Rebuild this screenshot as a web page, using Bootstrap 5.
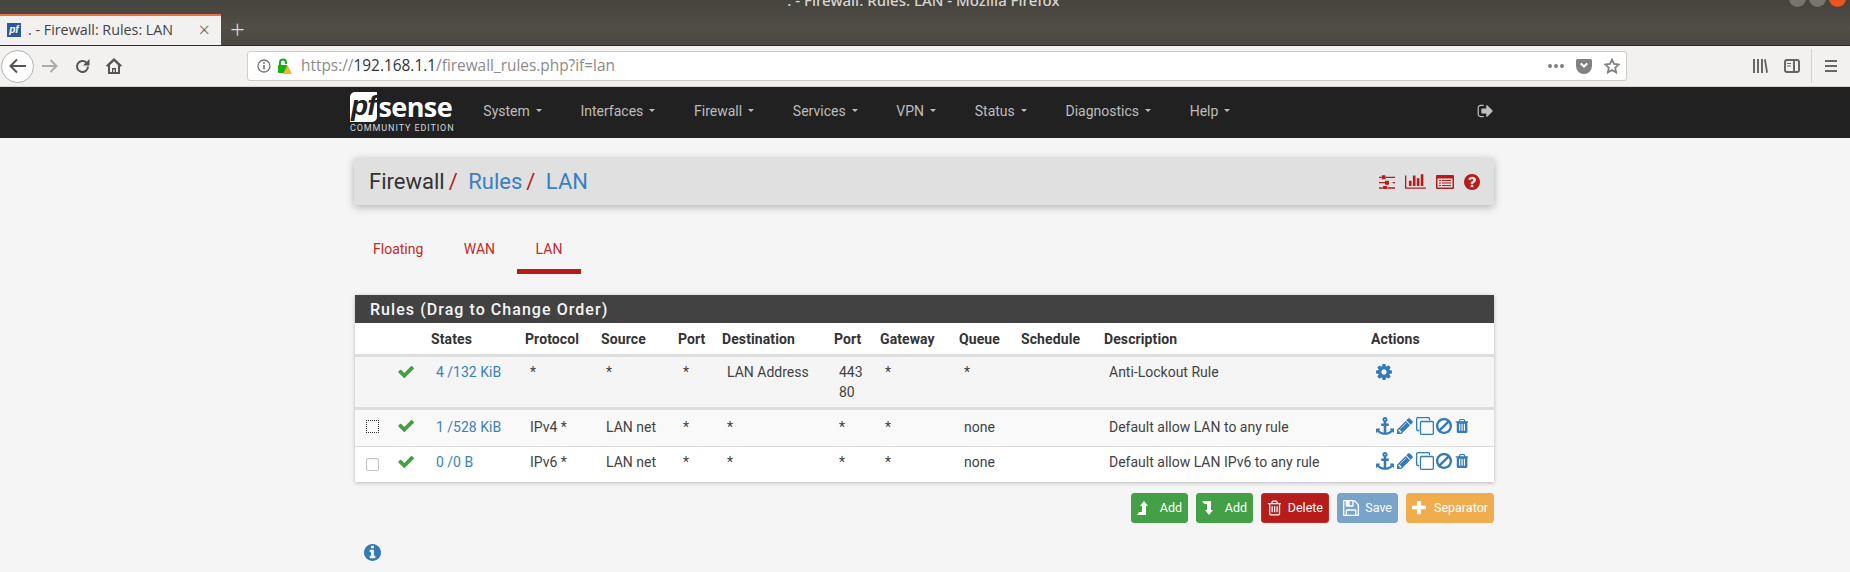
<!DOCTYPE html>
<html lang="en">
<head>
    <meta charset="UTF-8">
    <meta name="viewport" content="width=device-width, initial-scale=1.0">
    <title>. - Firewall: Rules: LAN</title>
    <link href="https://cdn.jsdelivr.net/npm/bootstrap@5.3.1/dist/css/bootstrap.min.css" rel="stylesheet">
    <style>
        body { background: #f5f5f5; font-family: Roboto, "Liberation Sans", sans-serif; font-size: 14px; line-height: 20px; color: #424242; overflow: hidden; }
        a { color: #3a80bf; text-decoration: none; }
        .ico { fill: currentColor; display: block; flex: none; }

        /* browser chrome */
        .win-bar { height: 46px; background: linear-gradient(#45433d, #514e47 60%, #4a4842); border-bottom: 1px solid #2b2a27; overflow: hidden; }
        .win-title { height: 14px; color: #d8d6d0; font: 500 15px/14px "Noto Sans", sans-serif; margin-top: -7px; padding-left: 58px; text-align: center; }
        .win-btns { gap: 3px; margin-top: -10px; padding-right: 4px; height: 17px; }
        .win-dot { width: 17px; height: 17px; border-radius: 50%; background: #77756e; }
        .win-dot.shut { background: #e95420; }
        .win-tabs { margin-top: 7px; height: 31px; }
        .win-tab { width: 221px; height: 31px; background: #f2f1ef; border-top: 2px solid #e9704a; padding-left: 7px; color: #444; font: 14.3px/28px "Open Sans", sans-serif; gap: 7px; }
        .tab-logo { width: 14px; height: 14px; margin-top: 7px; background: #2a5a9e; color: #fff; font: italic 700 10px/14px "Liberation Sans", sans-serif; text-align: center; }
        .tab-close { margin-left: auto; margin-right: 11px; font-size: 20px; color: #555; font-weight: 300; }
        .tab-plus { margin-left: 9px; color: #ddd; font: 300 26px/30px "Open Sans", sans-serif; }
        .tool-bar { height: 41px; background: #f2f1ef; border-bottom: 1px solid #d6d4d0; color: #555; }
        .back-btn { width: 33px; height: 33px; margin-left: 1px; border: 1px solid #b3b1ad; border-radius: 50%; background: #fff; }
        .tool-slot { width: 32px; }
        .url-box { width: 1380px; height: 30px; margin-left: 117px; background: #fff; border: 1px solid #cfcdc9; border-radius: 3px; font: 15.4px/28px "Open Sans", sans-serif; color: #8a8a8a; padding-left: 9px; }
        .url-box b { font-weight: 400; color: #333; }
        .url-lock { margin: 0 9px 0 7px; }
        .url-end { margin-left: auto; gap: 12px; padding-right: 6px; color: #808080; }
        .tool-end { margin-left: auto; padding-right: 13px; color: #666; }
        .tool-end .ico:first-child { margin-right: 16px; }
        .tool-sep { width: 1px; height: 34px; background: #d6d4d0; margin: 0 13px 0 11px; }

        /* pfsense header */
        .pf-nav { height: 51px; background: #212121; padding: 0; }
        .pf-wrap { width: 1140px; margin: 0 auto; }
        .pf-logo { width: 102px; margin-left: -5px; }
        .pf-mark { color: #fff; gap: 2px; height: 30px; }
        .pf-box { background: #fff; color: #212121; width: 30px; height: 30px; font: italic 700 28px/28px "Liberation Sans", sans-serif; text-align: center; border-radius: 5px 0 5px 0; letter-spacing: -1px; }
        .pf-sense { font: 700 27px/30px "Open Sans", sans-serif; letter-spacing: -.6px; }
        .pf-ed { font: 400 9px/11px Roboto, sans-serif; letter-spacing: .9px; color: #cfd8dc; white-space: nowrap; margin-top: 1px; }
        .pf-menu { margin: 0 0 4px 12px; flex-direction: row; }
        .pf-menu .nav-link { color: #bdbdbd; padding: 0 19.35px; font-size: 14px; line-height: 20px; }
        .pf-menu .dropdown-toggle::after { border-width: 3.5px 3.5px 0; margin-left: 6px; }
        .pf-out { margin: 0 2px 4px auto; color: #bdbdbd; }

        /* page */
        .crumb-panel { height: 47px; margin: 20px 1px 0 -1px; padding: 0 14px 0 15px; background: #e0e0e0; border-radius: 2px; box-shadow: 0 2px 9px rgba(0,0,0,.28); font-size: 22px; line-height: 47px; color: #333; }
        .crumb-sep { color: #b71c1c; margin: 0 10.5px 0 4px; }
        .crumb-icons { color: #b71c1c; gap: 10px; margin-left: auto; }
        .rule-tabs { height: 49px; margin: 20px 0 0 -1px; gap: 2.5px; }
        .rule-tabs .nav-link { color: #c62828; padding: 14px 19px 0; height: 49px; }
        .rule-tabs .nav-link.active { border-bottom: 5px solid #b71c1c; }
        .rule-panel { margin: 21px 1px 0 0; background: #fff; box-shadow: 0 1px 4px rgba(0,0,0,.25); }
        .rule-head { height: 28px; padding-left: 15px; background: #424242; color: #f5f5f5; font-size: 16px; font-weight: 500; line-height: 29px; letter-spacing: 1.05px; }
        .rule-table { table-layout: fixed; width: 1139px; margin: 0; --bs-table-bg: transparent; color: #424242; }
        .rule-table th { height: 32px; padding: 6px 0 0 5px; font-weight: 700; letter-spacing: .1px; color: #333; border-bottom: 3px solid #ddd; vertical-align: top; }
        .rule-table td { padding: 5px 0 0 10px; border-bottom: 1px solid #ddd; vertical-align: top; }
        .row-fixed td { height: 53px; background: #f5f5f5; border-bottom: 3px solid #ddd; }
        .row-four td { height: 38px; background: #f9f9f9; padding-top: 7px; }
        .row-six td { height: 36px; background: #fff; border-bottom: 0; }
        .rule-table td.cell-box { padding: 10px 0 0 11px; }
        .rule-table .row-six td.cell-box { padding-top: 11px; }
        .rule-table td.cell-ok { padding: 9px 0 0 5px; color: #43a047; }
        .rule-table .row-four td.cell-ok { padding-top: 10px; }
        .box-mark { display: block; margin: 0; width: 13px; height: 13px; border: 1px solid #c4c4c4; border-radius: 2px; box-shadow: inset 0 1px 1px rgba(0,0,0,.06); }
        .row-four .box-mark { border: 1px dotted #333; border-radius: 0; }
        .act-icons { color: #337ab7; gap: 2.75px; margin: 0; }
        .rule-table td.cell-act { padding-top: 7px; }
        .rule-table .row-six td.cell-act { padding-top: 5px; }
        .act-btns { gap: 8px; margin-top: 11px; padding-right: 1px; }
        .act-btns .btn { height: 30px; padding: 0 5px; border-radius: 3px; border-width: 1px; font-size: 12.5px; line-height: 28px; color: #fff; display: flex; align-items: center; }
        .act-btn-green { background: #43a047; border-color: #43a047; width: 57px; }
        .act-btn-red { background: #b71c1c; border-color: #c62828; width: 68px; }
        .act-btn-blue { background: #7aa3ca; border-color: #7aa3ca; width: 61px; }
        .act-btn-orange { background: #f0ad4e; border-color: #f0ad4e; width: 88px; }
        .act-btns .btn span { margin-left: auto; }
        .page-info { margin: 21px 0 0 9px; color: #337ab7; }
    </style>
</head>
<body>
    <!-- icon glyphs -->
    <svg width="0" height="0" class="position-absolute">
        <symbol id="i-check" viewBox="93 334 1578 1188"><path d="M1671 566q0 40-28 68l-724 724-136 136q-28 28-68 28t-68-28l-136-136-362-362q-28-28-28-68t28-68l136-136q28-28 68-28t68 28l294 295 656-657q28-28 68-28t68 28l136 136q28 28 28 68z"/></symbol>
        <symbol id="i-cog" viewBox="128 128 1536 1536"><path d="M1152 896q0-106-75-181t-181-75-181 75-75 181 75 181 181 75 181-75 75-181zm512-109v222q0 12-8 23t-20 13l-185 28q-19 54-39 91 35 50 107 138 10 12 10 25t-9 23q-27 37-99 108t-94 71q-12 0-26-9l-138-108q-44 23-91 38-16 136-29 186-7 28-36 28h-222q-14 0-24.5-8.5t-11.5-21.5l-28-184q-49-16-90-37l-141 107q-10 9-25 9-14 0-25-11-126-114-165-168-7-10-7-23 0-12 8-23 15-21 51-66.5t54-70.5q-27-50-41-99l-183-27q-13-2-21-12.5t-8-23.5v-222q0-12 8-23t19-13l186-28q14-46 39-92-40-57-107-138-10-12-10-24 0-10 9-23 26-36 98.5-107.5t94.5-71.5q13 0 26 10l138 107q44-23 91-38 16-136 29-186 7-28 36-28h222q14 0 24.5 8.5t11.5 21.5l28 184q49 16 90 37l142-107q9-9 24-9 13 0 25 10 129 119 165 170 7 8 7 22 0 12-8 23-15 21-51 66.5t-54 70.5q26 50 41 98l183 28q13 2 21 12.5t8 23.5z"/></symbol>
        <symbol id="i-question" viewBox="128 128 1536 1536"><path d="M1024 1376v-192q0-14-9-23t-23-9h-192q-14 0-23 9t-9 23v192q0 14 9 23t23 9h192q14 0 23-9t9-23zm256-672q0-88-55.5-163t-138.5-116-170-41q-243 0-371 213-15 24 8 42l132 100q7 6 19 6 16 0 25-12 53-68 86-92 34-24 86-24 48 0 85.5 26t37.5 59q0 38-20 61t-68 45q-63 28-115.5 86.5t-52.5 125.5v36q0 14 9 23t23 9h192q14 0 23-9t9-23q0-19 21.5-49.5t54.5-49.5q32-18 49-28.5t46-35 44.5-48 28-60.5 12.5-81zm384 192q0 209-103 385.5t-279.5 279.5-385.5 103-385.5-103-279.5-279.5-103-385.5 103-385.5 279.5-279.5 385.5-103 385.5 103 279.5 279.5 103 385.5z"/></symbol>
        <symbol id="i-info" viewBox="128 128 1536 1536"><path d="M1152 1376v-160q0-14-9-23t-23-9h-96v-512q0-14-9-23t-23-9h-320q-14 0-23 9t-9 23v160q0 14 9 23t23 9h96v320h-96q-14 0-23 9t-9 23v160q0 14 9 23t23 9h448q14 0 23-9t9-23zm-128-896v-160q0-14-9-23t-23-9h-192q-14 0-23 9t-9 23v160q0 14 9 23t23 9h192q14 0 23-9t9-23zm640 416q0 209-103 385.5t-279.5 279.5-385.5 103-385.5-103-279.5-279.5-103-385.5 103-385.5 279.5-279.5 385.5-103 385.5 103 279.5 279.5 103 385.5z"/></symbol>
        <symbol id="i-ban" viewBox="128 128 1536 1536"><path d="M1440 893q0-161-87-295l-754 753q137 89 297 89 111 0 211.5-43.5t173.5-116.5 116-174.5 43-212.5zm-999 299l755-754q-135-91-300-91-148 0-273 73t-198 199-73 274q0 162 89 299zm1223-299q0 157-61 300t-163.5 246-245 164-298.5 61-298.5-61-245-164-163.5-246-61-300 61-299.5 163.5-245.5 245-164 298.5-61 298.5 61 245 164 163.5 245.5 61 299.5z"/></symbol>
        <symbol id="i-trash" viewBox="128 64 1408 1664"><path d="M704 1376v-704q0-14-9-23t-23-9h-64q-14 0-23 9t-9 23v704q0 14 9 23t23 9h64q14 0 23-9t9-23zm256 0v-704q0-14-9-23t-23-9h-64q-14 0-23 9t-9 23v704q0 14 9 23t23 9h64q14 0 23-9t9-23zm256 0v-704q0-14-9-23t-23-9h-64q-14 0-23 9t-9 23v704q0 14 9 23t23 9h64q14 0 23-9t9-23zm-544-992h448l-48-117q-7-9-17-11h-317q-10 2-17 11zm928 32v64q0 14-9 23t-23 9h-96v948q0 83-47 143.5t-113 60.5h-832q-66 0-113-58.5t-47-141.5v-952h-96q-14 0-23-9t-9-23v-64q0-14 9-23t23-9h309l70-167q15-37 54-63t79-26h320q40 0 79 26t54 63l70 167h309q14 0 23 9t9 23z"/></symbol>
        <symbol id="i-trash-o" viewBox="128 64 1408 1664"><path d="M704 736v576q0 14-9 23t-23 9h-64q-14 0-23-9t-9-23v-576q0-14 9-23t23-9h64q14 0 23 9t9 23zm256 0v576q0 14-9 23t-23 9h-64q-14 0-23-9t-9-23v-576q0-14 9-23t23-9h64q14 0 23 9t9 23zm256 0v576q0 14-9 23t-23 9h-64q-14 0-23-9t-9-23v-576q0-14 9-23t23-9h64q14 0 23 9t9 23zm128 724v-948h-896v948q0 22 7 40.5t14.5 27 10.5 8.5h832q3 0 10.5-8.5t14.5-27 7-40.5zm-672-1076h448l-48-117q-7-9-17-11h-317q-10 2-17 11zm928 32v64q0 14-9 23t-23 9h-96v948q0 83-47 143.5t-113 60.5h-832q-66 0-113-58.5t-47-141.5v-952h-96q-14 0-23-9t-9-23v-64q0-14 9-23t23-9h309l70-167q15-37 54-63t79-26h320q40 0 79 26t54 63l70 167h309q14 0 23 9t9 23z"/></symbol>
        <symbol id="i-pencil" viewBox="128 128 1536 1536"><path d="M491 1536l91-91-235-235-91 91v107h128v128h107zm523-928q0-22-22-22-10 0-17 7l-542 542q-7 7-7 17 0 22 22 22 10 0 17-7l542-542q7-7 7-17zm-54-192l416 416-832 832h-416v-416zm683 96q0 53-37 90l-166 166-416-416 166-165q36-38 90-38 53 0 91 38l235 234q37 39 37 91z"/></symbol>
        <symbol id="i-anchor" viewBox="0 0 1792 1792"><path d="M960 256q0-26-19-45t-45-19-45 19-19 45 19 45 45 19 45-19 19-45zm832 928v352q0 22-20 30-8 2-12 2-12 0-23-9l-93-93q-119 143-318.5 226.5t-429.5 83.5-429.5-83.5-318.5-226.5l-93 93q-9 9-23 9-4 0-12-2-20-8-20-30v-352q0-14 9-23t23-9h352q22 0 30 20 8 19-7 35l-100 100q67 91 189.5 153.5t271.5 82.5v-647h-192q-26 0-45-19t-19-45v-128q0-26 19-45t45-19h192v-163q-58-34-93-92.5t-35-128.5q0-106 75-181t181-75 181 75 75 181q0 70-35 128.5t-93 92.5v163h192q26 0 45 19t19 45v128q0 26-19 45t-45 19h-192v647q149-20 271.5-82.5t189.5-153.5l-100-100q-15-16-7-35 8-20 30-20h352q14 0 23 9t9 23z"/></symbol>
        <symbol id="i-clone" viewBox="0 0 1792 1792"><path d="M1664 1632v-1088q0-13-9.5-22.5t-22.5-9.5h-1088q-13 0-22.5 9.5t-9.5 22.5v1088q0 13 9.5 22.5t22.5 9.5h1088q13 0 22.5-9.5t9.5-22.5zm128-1088v1088q0 66-47 113t-113 47h-1088q-66 0-113-47t-47-113v-1088q0-66 47-113t113-47h1088q66 0 113 47t47 113zm-384-384v160h-128v-160q0-13-9.5-22.5t-22.5-9.5h-1088q-13 0-22.5 9.5t-9.5 22.5v1088q0 13 9.5 22.5t22.5 9.5h160v128h-160q-66 0-113-47t-47-113v-1088q0-66 47-113t113-47h1088q66 0 113 47t47 113z"/></symbol>
        <symbol id="i-sliders" viewBox="128 256 1536 1280"><path d="M480 1408v128h-352v-128h352zm352-128q26 0 45 19t19 45v256q0 26-19 45t-45 19h-256q-26 0-45-19t-19-45v-256q0-26 19-45t45-19h256zm160-384v128h-864v-128h864zm-640-512v128h-224v-128h224zm1312 1024v128h-736v-128h736zm-960-1152q26 0 45 19t19 45v256q0 26-19 45t-45 19h-256q-26 0-45-19t-19-45v-256q0-26 19-45t45-19h256zm320 512q26 0 45 19t19 45v256q0 26-19 45t-45 19h-256q-26 0-45-19t-19-45v-256q0-26 19-45t45-19h256zm640 128v128h-224v-128h224zm0-512v128h-864v-128h864z"/></symbol>
        <symbol id="i-chart" viewBox="0 256 2048 1408"><path d="M640 896v512h-256v-512h256zm384-512v1024h-256v-1024h256zm1024 1152v128h-2048v-1280h128v1152h1920zm-640-896v768h-256v-768h256zm384-384v1152h-256v-1152h256z"/></symbol>
        <symbol id="i-list" viewBox="0 0 18 14"><path fill-rule="evenodd" d="M1 0h16a1 1 0 0 1 1 1v12a1 1 0 0 1-1 1H1a1 1 0 0 1-1-1V1a1 1 0 0 1 1-1zM1.500 3.500v9h15v-9zM3 5h2v1H3zM6 5h9v1H6zM3 7.500h2v1H3zM6 7.500h9v1H6zM3 10h2v1H3zM6 10h9v1H6z"/></symbol>
        <symbol id="i-out" viewBox="0 192 1664 1408"><path d="M704 1440q0 4 1 20t.5 26.500-3 23.500-10 19.500-20.500 6.500h-320q-119 0-203.500-84.500t-84.500-203.500v-704q0-119 84.500-203.500t203.500-84.500h320q13 0 22.500 9.500t9.500 22.500q0 4 1 20t.5 26.500-3 23.500-10 19.500-20.500 6.500h-320q-66 0-113 47t-47 113v704q0 66 47 113t113 47h312l11.500 1 11.500 3 8 5.500 7 9 2 13.500zm928-544q0 26-19 45l-544 544q-19 19-45 19t-45-19-19-45v-288h-448q-26 0-45-19t-19-45v-384q0-26 19-45t45-19h448v-288q0-26 19-45t45-19 45 19l544 544q19 19 19 45z"/></symbol>
        <symbol id="i-save" viewBox="128 128 1536 1536"><path d="M512 1536h768v-384h-768v384zm896 0h128v-896q0-14-10-38.500t-20-34.500l-281-281q-10-10-34-20t-39-10v416q0 40-28 68t-68 28h-576q-40 0-68-28t-28-68v-416h-128v1280h128v-416q0-40 28-68t68-28h832q40 0 68 28t28 68v416zm-384-928v-320q0-13-9.500-22.500t-22.500-9.500h-192q-13 0-22.500 9.500t-9.500 22.500v320q0 13 9.500 22.500t22.500 9.500h192q13 0 22.500-9.500t9.500-22.500zm640 32v928q0 40-28 68t-68 28h-1344q-40 0-68-28t-28-68v-1344q0-40 28-68t68-28h928q40 0 88 20t76 48l280 280q28 28 48 76t20 88z"/></symbol>
        <symbol id="i-plus" viewBox="192 192 1408 1408"><path d="M1600 736v192q0 40-28 68t-68 28h-416v416q0 40-28 68t-68 28h-192q-40 0-68-28t-28-68v-416h-416q-40 0-68-28t-28-68v-192q0-40 28-68t68-28h416v-416q0-40 28-68t68-28h192q40 0 68 28t28 68v416h416q40 0 68 28t28 68z"/></symbol>
        <symbol id="i-lvl-up" viewBox="0 0 11 14"><path d="M7 0l4 5H9v9H0l2.200-3H5V5H3z"/></symbol>
        <symbol id="i-lvl-down" viewBox="0 0 11 14"><path d="M7 14l4-5H9V0H0l2.200 3H5v6H3z"/></symbol>
    </svg>

    <!-- window title and tab strip -->
    <div class="win-bar">
        <div class="d-flex">
            <div class="win-title flex-grow-1">. - Firewall: Rules: LAN - Mozilla Firefox</div>
            <div class="win-btns d-flex">
                <div class="win-dot"></div><div class="win-dot"></div><div class="win-dot shut"></div>
            </div>
        </div>
        <div class="win-tabs d-flex align-items-start">
            <div class="win-tab d-flex">
                <div class="tab-logo align-self-start">pf</div>
                <span>. - Firewall: Rules: LAN</span>
                <span class="tab-close">&times;</span>
            </div>
            <span class="tab-plus">+</span>
        </div>
    </div>

    <!-- address bar -->
    <div class="tool-bar d-flex align-items-center">
        <div class="back-btn d-flex align-items-center justify-content-center">
            <svg class="ico" width="18" height="16" viewBox="0 0 18 16"><path d="M17 8H2M8 1.500L1.500 8 8 14.500" fill="none" stroke="#555" stroke-width="2"/></svg>
        </div>
        <div class="tool-slot d-flex justify-content-center">
            <svg class="ico" width="16" height="14" viewBox="0 0 16 14"><path d="M0 7h14M8.500 1l6 6-6 6" fill="none" stroke="#aaa" stroke-width="2"/></svg>
        </div>
        <div class="tool-slot d-flex justify-content-center">
            <svg class="ico" width="15" height="15" viewBox="0 0 15 15"><path d="M13 7.500a5.500 5.500 0 1 1-1.600-3.900" fill="none" stroke="#555" stroke-width="2"/><path d="M14.500 0v6.500H8z" fill="#555"/></svg>
        </div>
        <div class="tool-slot d-flex justify-content-center">
            <svg class="ico" width="16" height="16" viewBox="0 0 16 16"><path fill-rule="evenodd" d="M8 0l8 7.500-1.300 1.300-.7-.6V16H2V8.200l-.7.6L0 7.500zM4 7v7h2v-4h4v4h2V7L8 3.200zM7.300 11.500v2.500h1.400v-2.500z" fill="#555"/></svg>
        </div>
        <div class="url-box d-flex align-items-center">
            <svg class="ico" width="14" height="14" viewBox="0 0 14 14"><circle cx="7" cy="7" r="6" fill="none" stroke="#777" stroke-width="1.300"/><path d="M6.200 6h1.600v4.500H6.200zM6.200 3.300h1.600v1.600H6.200z" fill="#777"/></svg>
            <svg class="ico url-lock" width="14" height="16" viewBox="0 0 14 16"><path d="M2 7V4.500a3 3 0 0 1 6 0V6" fill="none" stroke="#12b012" stroke-width="2"/><rect x="0" y="7" width="9" height="8" rx="1" fill="#12b012"/><path d="M9.500 7l4.500 9H5z" fill="#f5b32a"/></svg>
            <span>https://<b>192.168.1.1</b>/firewall_rules.php?if=lan</span>
            <div class="url-end d-flex align-items-center">
                <svg class="ico" width="16" height="4" viewBox="0 0 16 4"><circle cx="2" cy="2" r="2"/><circle cx="8" cy="2" r="2"/><circle cx="14" cy="2" r="2"/></svg>
                <svg class="ico" width="16" height="15" viewBox="0 0 16 15"><path fill-rule="evenodd" d="M1.500 0h13A1.500 1.500 0 0 1 16 1.500V7A8 8 0 0 1 0 7V1.500A1.500 1.500 0 0 1 1.500 0zM4 5l4 4 4-4-1.500-1.200L8 6 5.500 3.800z"/></svg>
                <svg class="ico" width="16" height="16" viewBox="0 0 16 16"><path d="M8 1.500l2 4.400 4.700.6-3.500 3.200.9 4.700L8 12l-4.100 2.400.9-4.700-3.500-3.200L6 5.900z" fill="none" stroke="#808080" stroke-width="1.800"/></svg>
            </div>
        </div>
        <div class="tool-end d-flex align-items-center">
            <svg class="ico" width="15" height="14" viewBox="0 0 15 14"><path d="M0 0h2v14H0zM4 0h2v14H4zM8 0h2v14H8zM11 .5l1.800-.5L15 13.500l-1.800.5z"/></svg>
            <svg class="ico" width="16" height="14" viewBox="0 0 16 14"><rect x="1" y="1" width="14" height="12" rx="2" fill="none" stroke="#666" stroke-width="2"/><path d="M9 1h2v12H9zM3 4h4v1H3zM3 6.500h4v1H3z"/></svg>
            <div class="tool-sep"></div>
            <svg class="ico" width="12" height="12" viewBox="0 0 12 12"><path d="M0 0h12v2H0zM0 5h12v2H0zM0 10h12v2H0z"/></svg>
        </div>
    </div>

    <!-- pfSense navbar -->
    <nav class="navbar pf-nav">
        <div class="pf-wrap d-flex align-items-center">
            <a class="pf-logo d-block" href="#">
                <div class="pf-mark d-flex">
                    <div class="pf-box">pf</div>
                    <div class="pf-sense">sense</div>
                </div>
                <div class="pf-ed">COMMUNITY EDITION</div>
            </a>
            <ul class="navbar-nav pf-menu">
                <li class="nav-item"><a class="nav-link dropdown-toggle" href="#">System</a></li>
                <li class="nav-item"><a class="nav-link dropdown-toggle" href="#">Interfaces</a></li>
                <li class="nav-item"><a class="nav-link dropdown-toggle" href="#">Firewall</a></li>
                <li class="nav-item"><a class="nav-link dropdown-toggle" href="#">Services</a></li>
                <li class="nav-item"><a class="nav-link dropdown-toggle" href="#">VPN</a></li>
                <li class="nav-item"><a class="nav-link dropdown-toggle" href="#">Status</a></li>
                <li class="nav-item"><a class="nav-link dropdown-toggle" href="#">Diagnostics</a></li>
                <li class="nav-item"><a class="nav-link dropdown-toggle" href="#">Help</a></li>
            </ul>
            <a class="pf-out" href="#"><svg class="ico" width="16" height="14"><use href="#i-out"/></svg></a>
        </div>
    </nav>

    <div class="pf-wrap">
        <!-- breadcrumb panel -->
        <div class="crumb-panel d-flex align-items-center">
            <span>Firewall</span><span class="crumb-sep">/</span>
            <a href="#">Rules</a><span class="crumb-sep">/</span>
            <a href="#">LAN</a>
            <div class="crumb-icons d-flex align-items-center">
                <svg class="ico" width="16" height="14"><use href="#i-sliders"/></svg>
                <svg class="ico" width="21" height="15"><use href="#i-chart"/></svg>
                <svg class="ico" width="18" height="14"><use href="#i-list"/></svg>
                <svg class="ico" width="16" height="16"><use href="#i-question"/></svg>
            </div>
        </div>

        <!-- interface tabs -->
        <ul class="nav rule-tabs">
            <li class="nav-item"><a class="nav-link" href="#">Floating</a></li>
            <li class="nav-item"><a class="nav-link" href="#">WAN</a></li>
            <li class="nav-item"><a class="nav-link active" href="#">LAN</a></li>
        </ul>

        <!-- rules table -->
        <div class="rule-panel">
            <div class="rule-head">Rules (Drag to Change Order)</div>
            <table class="table rule-table">
                <colgroup>
                    <col style="width:38px"><col style="width:33px"><col style="width:94px"><col style="width:76px">
                    <col style="width:77px"><col style="width:44px"><col style="width:112px"><col style="width:46px">
                    <col style="width:79px"><col style="width:62px"><col style="width:83px"><col style="width:267px"><col style="width:128px">
                </colgroup>
                <thead>
                    <tr>
                        <th></th><th></th><th>States</th><th>Protocol</th><th>Source</th><th>Port</th><th>Destination</th>
                        <th>Port</th><th>Gateway</th><th>Queue</th><th>Schedule</th><th>Description</th><th>Actions</th>
                    </tr>
                </thead>
                <tbody>
                    <tr class="row-fixed">
                        <td></td>
                        <td class="cell-ok"><svg class="ico" width="16" height="12"><use href="#i-check"/></svg></td>
                        <td><a href="#">4 /132 KiB</a></td><td>*</td><td>*</td><td>*</td><td>LAN Address</td>
                        <td>443<br>80</td><td>*</td><td>*</td><td></td><td>Anti-Lockout Rule</td>
                        <td class="cell-act"><a href="#" class="act-icons d-flex"><svg class="ico" width="16" height="16"><use href="#i-cog"/></svg></a></td>
                    </tr>
                    <tr class="row-four">
                        <td class="cell-box"><span class="box-mark"></span></td>
                        <td class="cell-ok"><svg class="ico" width="16" height="12"><use href="#i-check"/></svg></td>
                        <td><a href="#">1 /528 KiB</a></td><td>IPv4 *</td><td>LAN net</td><td>*</td><td>*</td>
                        <td>*</td><td>*</td><td>none</td><td></td><td>Default allow LAN to any rule</td>
                        <td class="cell-act">
                            <div class="act-icons d-flex align-items-center">
                                <svg class="ico" width="18" height="18"><use href="#i-anchor"/></svg>
                                <svg class="ico" width="16" height="16"><use href="#i-pencil"/></svg>
                                <svg class="ico" width="18" height="18"><use href="#i-clone"/></svg>
                                <svg class="ico" width="16" height="16"><use href="#i-ban"/></svg>
                                <svg class="ico" width="13" height="16"><use href="#i-trash"/></svg>
                            </div>
                        </td>
                    </tr>
                    <tr class="row-six">
                        <td class="cell-box"><span class="box-mark"></span></td>
                        <td class="cell-ok"><svg class="ico" width="16" height="12"><use href="#i-check"/></svg></td>
                        <td><a href="#">0 /0 B</a></td><td>IPv6 *</td><td>LAN net</td><td>*</td><td>*</td>
                        <td>*</td><td>*</td><td>none</td><td></td><td>Default allow LAN IPv6 to any rule</td>
                        <td class="cell-act">
                            <div class="act-icons d-flex align-items-center">
                                <svg class="ico" width="18" height="18"><use href="#i-anchor"/></svg>
                                <svg class="ico" width="16" height="16"><use href="#i-pencil"/></svg>
                                <svg class="ico" width="18" height="18"><use href="#i-clone"/></svg>
                                <svg class="ico" width="16" height="16"><use href="#i-ban"/></svg>
                                <svg class="ico" width="13" height="16"><use href="#i-trash"/></svg>
                            </div>
                        </td>
                    </tr>
                </tbody>
            </table>
        </div>

        <!-- form buttons -->
        <div class="act-btns d-flex justify-content-end">
            <a href="#" class="btn act-btn-green"><svg class="ico" width="11" height="14"><use href="#i-lvl-up"/></svg><span>Add</span></a>
            <a href="#" class="btn act-btn-green"><svg class="ico" width="11" height="14"><use href="#i-lvl-down"/></svg><span>Add</span></a>
            <a href="#" class="btn act-btn-red"><svg class="ico" width="14" height="16"><use href="#i-trash-o"/></svg><span>Delete</span></a>
            <a href="#" class="btn act-btn-blue"><svg class="ico" width="16" height="16"><use href="#i-save"/></svg><span>Save</span></a>
            <a href="#" class="btn act-btn-orange"><svg class="ico" width="14" height="14"><use href="#i-plus"/></svg><span>Separator</span></a>
        </div>

        <div class="page-info"><svg class="ico" width="17" height="17"><use href="#i-info"/></svg></div>
    </div>

    <script src="https://cdn.jsdelivr.net/npm/bootstrap@5.3.1/dist/js/bootstrap.bundle.min.js"></script>
</body>
</html>
